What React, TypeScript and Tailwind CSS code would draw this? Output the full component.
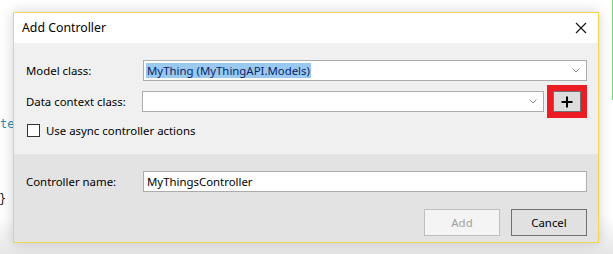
import React from 'react';

const Chevron = () => (
  <svg width="8" height="5" viewBox="0 0 8 5" className="shrink-0">
    <path d="M0.5 0.5 L4 4 L7.5 0.5" fill="none" stroke="#8a8a8a" strokeWidth="1" />
  </svg>
);

const Combo: React.FC<{ children?: React.ReactNode; className?: string }> = ({ children, className }) => (
  <div className={`h-[21px] bg-white border border-[#acacac] flex items-center pl-[2px] pr-[6px] ${className ?? ''}`}>
    <div className="flex-1 flex items-center">{children}</div>
    <Chevron />
  </div>
);

export default function App() {
  return (
    <div
      className="w-[613px] h-[254px] relative overflow-hidden bg-gradient-to-b from-white from-85% to-[#e6e6e6] text-[11.4px] text-black"
      style={{ fontFamily: '"Noto Sans", "Open Sans", sans-serif' }}
    >
      {/* editor text behind the dialog */}
      <div className="absolute left-0 top-[115px] text-[#2b91af] text-[12px]" style={{ fontFamily: '"DejaVu Sans Mono", monospace' }}>te</div>
      <div className="absolute left-[-1px] top-[190px] text-[#1e1e1e] text-[12px]" style={{ fontFamily: '"DejaVu Sans Mono", monospace' }}>{'}'}</div>
      <div className="absolute right-0 top-0 w-[1px] h-[100px] bg-[#6ee06e]" />

      <div className="pl-[13px] pt-[12px]">
        <div className="relative w-[586px] h-[231px] border border-[#f2d54a] flex flex-col shadow-[0_0_12px_rgba(0,0,0,0.18)]">
          {/* title bar */}
          <div className="h-[30px] bg-white flex items-center justify-between pl-[8px] pr-[8px]">
            <span className="text-[12.3px] leading-none pt-[1px]">Add Controller</span>
            <svg width="12" height="12" viewBox="0 0 12 12" className="mr-[3px]">
              <path d="M1 1 L11 11 M11 1 L1 11" stroke="#111" strokeWidth="1.1" />
            </svg>
          </div>

          {/* main section */}
          <div className="h-[111px] bg-[#f0f0f0] pl-[12px] pr-[11px] pt-[17px] flex flex-col">
            <div className="flex items-center">
              <span className="w-[117px]">Model class:</span>
              <Combo className="flex-1">
                <span className="bg-[#99c9ef] text-[#0a246a] leading-[15px] pl-[1px] pr-[1px]">MyThing (MyThingAPI.Models)</span>
              </Combo>
            </div>
            <div className="flex items-center mt-[4px]">
              <span className="w-[117px]">Data context class:</span>
              <Combo className="w-[407px]" />
              <div className="ml-[3px] w-[40px] h-[33px] border-[6px] border-[#ec1c24] flex items-center justify-center">
                <div className="w-[28px] h-[21px] bg-[#dddddd] border border-[#707070] flex items-center justify-center">
                  <svg width="12" height="12" viewBox="0 0 12 12">
                    <path d="M6 0.5 V11.5 M0.5 6 H11.5" stroke="#000" strokeWidth="2" />
                  </svg>
                </div>
              </div>
            </div>
            <div className="flex items-center h-[17px] mt-[4px] ml-[1px]">
              <div className="w-[13px] h-[13px] bg-white border border-[#333]" />
              <span className="ml-[6px]">Use async controller actions</span>
            </div>
          </div>

          {/* footer section */}
          <div className="flex-1 bg-[#e3e3e3] pl-[12px] pr-[11px] pt-[17px] flex flex-col">
            <div className="flex items-center">
              <span className="w-[117px]">Controller name:</span>
              <div className="flex-1 h-[21px] bg-white border border-[#acacac] flex items-center pl-[3px]">MyThingsController</div>
            </div>
            <div className="flex justify-end mt-[17px] gap-[11px]">
              <div className="w-[76px] h-[27px] bg-[#f4f4f4] border border-[#bfbfbf] text-[#a0a0a0] flex items-center justify-center">Add</div>
              <div className="w-[76px] h-[27px] bg-[#e1e1e1] border border-[#707070] flex items-center justify-center">Cancel</div>
            </div>
          </div>
        </div>
      </div>
    </div>
  );
}
